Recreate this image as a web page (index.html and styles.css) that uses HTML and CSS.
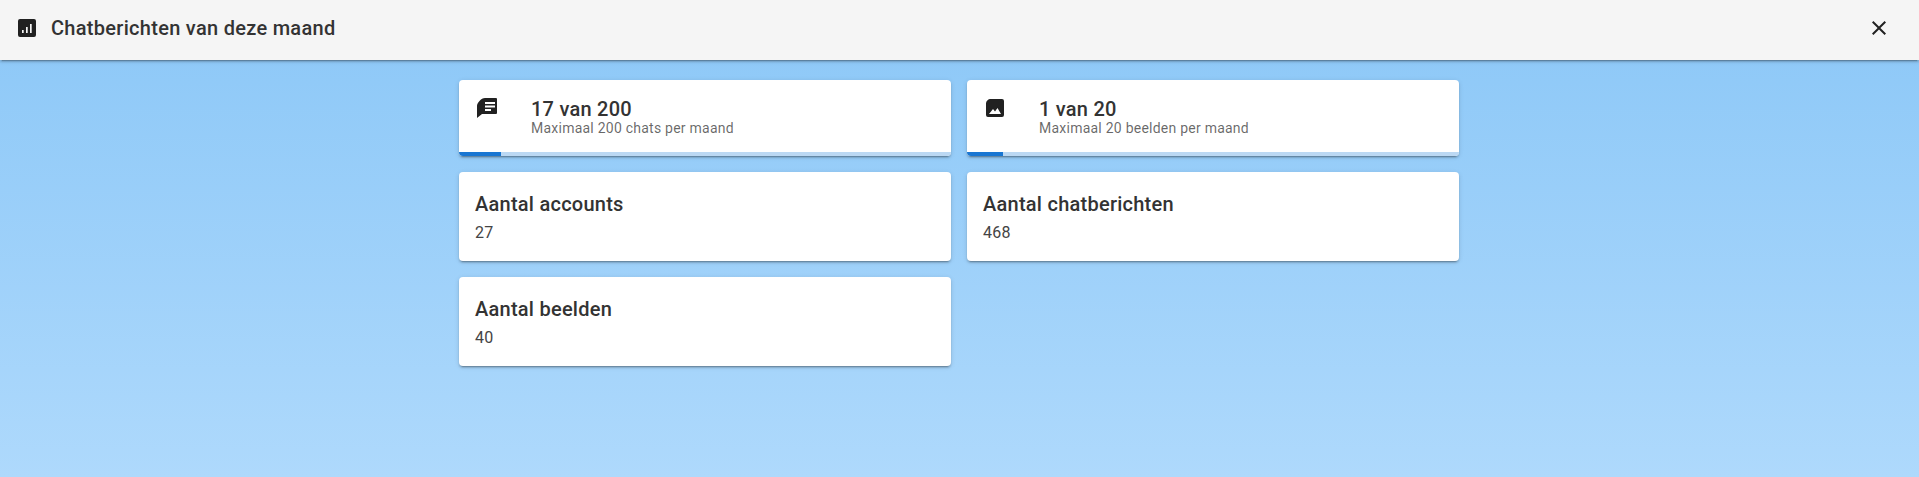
FILE: index.html
```html
<!DOCTYPE html>
<html lang="nl">
<head>
<meta charset="utf-8">
<title>Chatberichten van deze maand</title>
<link rel="stylesheet" href="styles.css">
</head>
<body>
<header class="toolbar">
  <svg class="icon" viewBox="0 0 24 24"><path fill-rule="evenodd" d="M5 3H19A2 2 0 0 1 21 5V19A2 2 0 0 1 19 21H5A2 2 0 0 1 3 19V5A2 2 0 0 1 5 3ZM15 8V17H16.700V8ZM11 11V17H12.700V11ZM7 14V17H8.700V14Z"/></svg>
  <h1 class="toolbar-title">Chatberichten van deze maand</h1>
  <svg class="icon close" viewBox="0 0 24 24"><path d="M19 6.41 17.59 5 12 10.59 6.41 5 5 6.41 10.59 12 5 17.59 6.41 19 12 13.41 17.59 19 19 17.59 13.41 12Z"/></svg>
</header>
<main class="grid">
  <section class="card usage">
    <div class="usage-body">
      <svg class="icon usage-icon" viewBox="0 0 24 24"><path fill-rule="evenodd" d="M10 2H21A1 1 0 0 1 22 3V17A1 1 0 0 1 21 18H7L2 22V10C2 7 6 2 10 2ZM10 6V8H20V6ZM10 9.5V11.500H20V9.500ZM10 13V15H16V13Z"/></svg>
      <div>
        <div class="usage-title">17 van 200</div>
        <div class="usage-sub">Maximaal 200 chats per maand</div>
      </div>
    </div>
    <div class="track"><div class="bar" style="width:8.5%"></div></div>
  </section>
  <section class="card usage">
    <div class="usage-body">
      <svg class="icon usage-icon" viewBox="0 0 24 24"><path fill-rule="evenodd" d="M8 3H19A2 2 0 0 1 21 5V19A2 2 0 0 1 19 21H5A2 2 0 0 1 3 19V8C3 5 5 3 8 3ZM6 18H18L14.500 12 12 15.500 10 13Z"/></svg>
      <div>
        <div class="usage-title">1 van 20</div>
        <div class="usage-sub">Maximaal 20 beelden per maand</div>
      </div>
    </div>
    <div class="track"><div class="bar" style="width:7.300%"></div></div>
  </section>
  <section class="card stat">
    <h2 class="stat-title">Aantal accounts</h2>
    <div class="stat-value">27</div>
  </section>
  <section class="card stat">
    <h2 class="stat-title">Aantal chatberichten</h2>
    <div class="stat-value">468</div>
  </section>
  <section class="card stat">
    <h2 class="stat-title">Aantal beelden</h2>
    <div class="stat-value">40</div>
  </section>
</main>
</body>
</html>
```
FILE: styles.css
```css
* { box-sizing: border-box; }
html, body { height: 100%; }
body {
  margin: 0;
  overflow: hidden;
  font-family: Roboto, "Liberation Sans", sans-serif;
  color: #333;
  background: linear-gradient(#8bc7f7, #aed9fc);
}
.icon { width: 24px; height: 24px; flex: none; fill: #212121; display: block; }
.toolbar {
  height: 60px;
  padding: 0 16px 4px 15px;
  display: flex;
  align-items: center;
  background: #f5f5f5;
  box-shadow: 0 3px 1px -2px rgba(0,0,0,.2), 0 2px 2px 0 rgba(0,0,0,.14), 0 1px 5px 0 rgba(0,0,0,.12);
  position: relative;
}
.toolbar-title {
  margin: 0 0 0 12px;
  flex: 1;
  font-size: 20px;
  font-weight: 500;
  letter-spacing: .0145em;
  line-height: 24px;
}
.close { margin-right: 12px; }
.grid {
  width: 1001px;
  margin: 20px auto 0;
  display: grid;
  grid-template-columns: 492px 492px;
  gap: 16px;
  align-items: start;
}
.card {
  background: #fff;
  border-radius: 4px;
  overflow: hidden;
  box-shadow: 0 3px 1px -2px rgba(0,0,0,.2), 0 2px 2px 0 rgba(0,0,0,.14), 0 1px 5px 0 rgba(0,0,0,.12);
}
.usage { height: 76px; display: flex; flex-direction: column; }
.usage-body { flex: 1; display: flex; padding: 16px 16px 0; }
.usage-icon { margin-right: 32px; }
.usage-title { font-size: 20px; font-weight: 500; line-height: 24px; margin-top: 1px; letter-spacing: .012em; }
.usage-sub { font-size: 14px; line-height: 16px; margin-top: -1px; color: rgba(0,0,0,.6); letter-spacing: .017em; }
.track { height: 4px; background: #bbd8f3; }
.bar { height: 100%; background: #1976d2; }
.stat { height: 89px; padding: 20px 16px 0; }
.stat-title { margin: 0; font-size: 20px; font-weight: 500; line-height: 24px; letter-spacing: .0125em; }
.stat-value { margin-top: 5px; font-size: 16px; font-weight: 400; line-height: 24px; letter-spacing: .015em; color: #444; }
```
